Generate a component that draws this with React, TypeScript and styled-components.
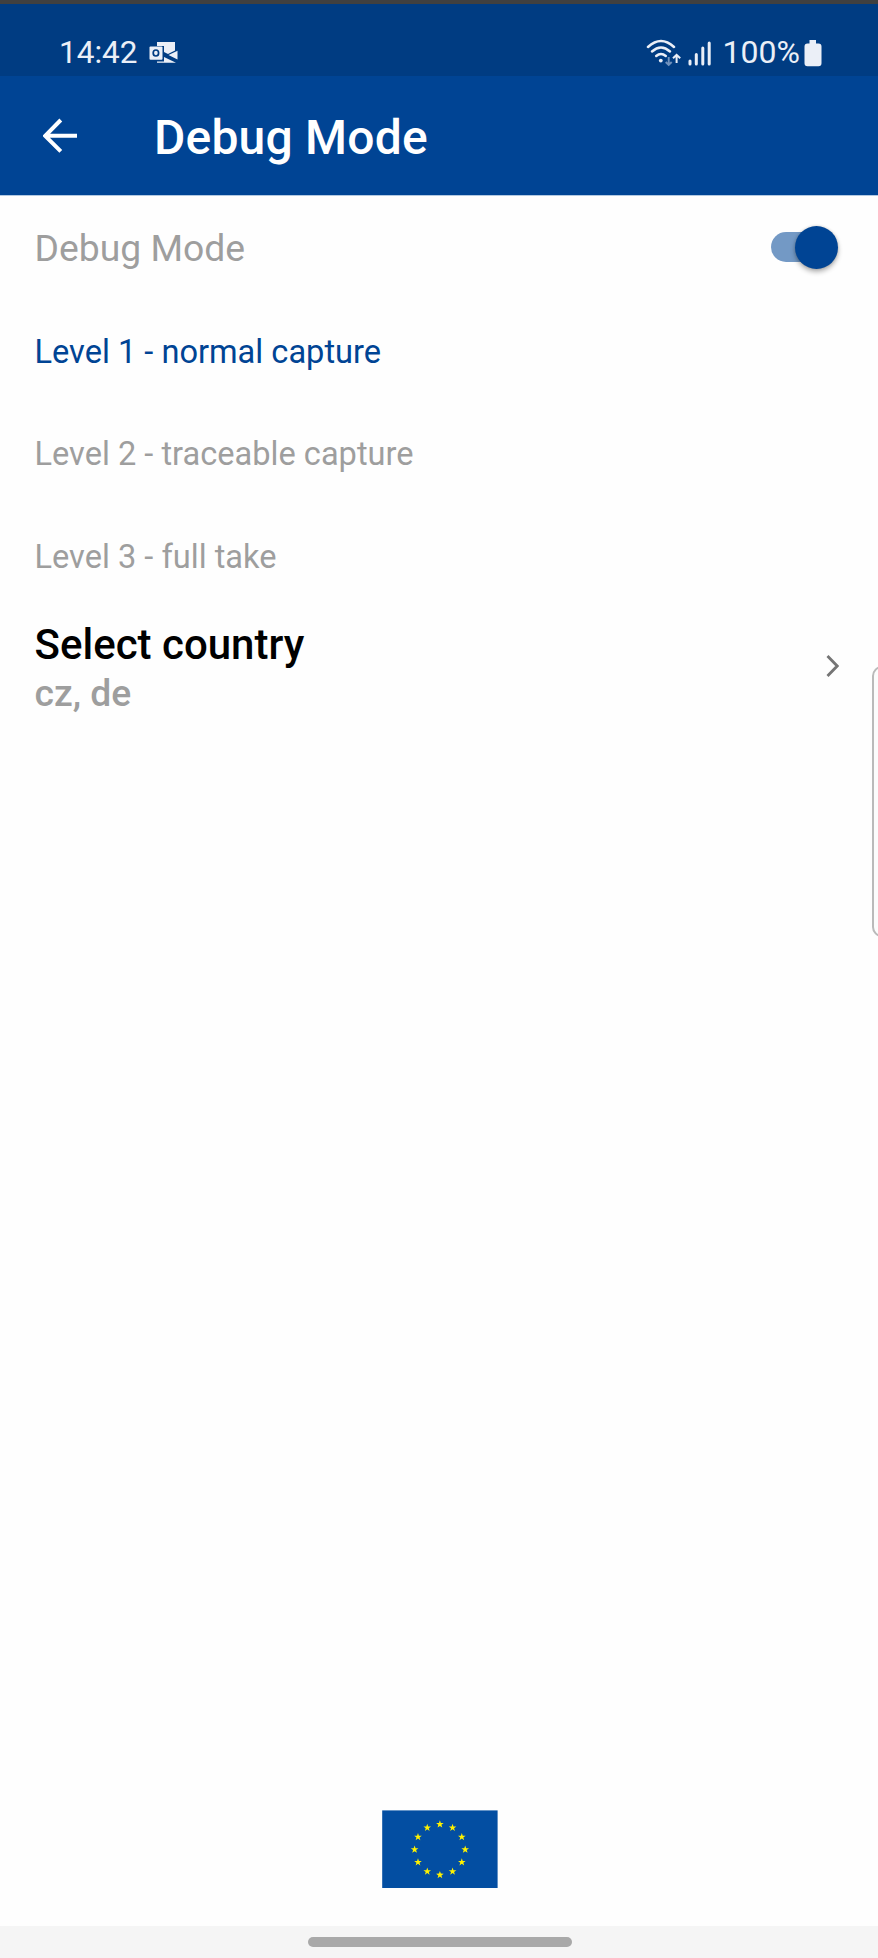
import React from 'react';
import styled, { createGlobalStyle } from 'styled-components';

const GlobalStyle = createGlobalStyle`
  * { box-sizing: border-box; }
  body {
    margin: 0;
    background: #fefefe;
    font-family: Roboto, "Liberation Sans", sans-serif;
  }
`;

const Screen = styled.div`
  position: relative;
  display: flex;
  flex-direction: column;
  width: 878px;
  height: 1958px;
  overflow: hidden;
  background: #fefefe;
`;

const StatusBar = styled.div`
  display: flex;
  justify-content: space-between;
  height: 76px;
  padding: 25px 56px 0 59px;
  border-top: 4px solid #404040;
  background: #003c82;
  color: #ebeff7;
`;

const StatusGroup = styled.div`
  display: flex;
  align-items: flex-start;
  height: 46px;
`;

const StatusText = styled.span<{ $size?: number; $line?: number }>`
  font-size: ${(p) => p.$size ?? 32}px;
  line-height: ${(p) => p.$line ?? 46}px;
  white-space: nowrap;
`;

const BatteryLevel = styled(StatusText)`
  margin-left: 11px;
`;

const Icon = styled.svg<{ $left?: number; $top?: number }>`
  display: block;
  flex: none;
  margin-left: ${(p) => p.$left ?? 0}px;
  margin-top: ${(p) => p.$top ?? 0}px;
`;

const AppBar = styled.header`
  display: flex;
  align-items: center;
  height: 120px;
  padding: 0 43px;
  border-bottom: 1px solid #b2c9e2;
  background: #004494;
  color: #fff;
`;

const Title = styled.h1`
  margin: 4px 0 0 75px;
  font-size: 48px;
  font-weight: 500;
  line-height: 56px;
  letter-spacing: 0.2px;
`;

const SettingRow = styled.div<{ $height: number }>`
  display: flex;
  align-items: center;
  justify-content: space-between;
  height: ${(p) => p.$height}px;
  padding: 0 39px 0 34.5px;
`;

const Label = styled.span<{ $size: number; $color: string; $weight?: number; $drop?: number }>`
  font-size: ${(p) => p.$size}px;
  font-weight: ${(p) => p.$weight ?? 400};
  line-height: 49px;
  padding-top: ${(p) => p.$drop ?? 0}px;
  color: ${(p) => p.$color};
  white-space: nowrap;
`;

const LabelStack = styled.div`
  display: flex;
  flex-direction: column;
  padding-top: 6.5px;
`;

const Track = styled.div`
  display: flex;
  align-items: center;
  justify-content: flex-end;
  width: 67px;
  height: 30px;
  margin: 0 1px 1px 0;
  border-radius: 15px;
  background: linear-gradient(to right, #7399c5 0 57px, transparent 57px);
`;

const Thumb = styled.div`
  flex: none;
  width: 43px;
  height: 43px;
  border-radius: 50%;
  background: #004494;
  box-shadow: 0 3px 5px rgba(0, 0, 0, 0.3), 0 0 3px rgba(0, 0, 0, 0.16);
`;

const FlagArea = styled.footer`
  display: flex;
  justify-content: center;
  margin-top: auto;
  padding: 0 0 38px 1px;
`;

const HomeBar = styled.div`
  display: flex;
  justify-content: center;
  height: 32px;
  padding-top: 11px;
  padding-left: 2px;
  background: #f5f5f5;
`;

const HomeHandle = styled.div`
  width: 264px;
  height: 10px;
  border-radius: 5px;
  background: #a9a9a9;
`;

const EdgePanelHandle = styled.div`
  position: absolute;
  top: 666px;
  right: -14px;
  width: 20px;
  height: 271px;
  border: 2px solid #bababa;
  border-radius: 10px;
  background: #fcfcfc;
`;

const BLUE = '#004494';
const GREY = '#9e9e9e';

function star(cx: number, cy: number, r: number) {
  return Array.from({ length: 10 }, (_, i) => {
    const a = (Math.PI / 5) * i - Math.PI / 2;
    const d = i % 2 ? r * 0.4 : r;
    return `${cx + d * Math.cos(a)},${cy + d * Math.sin(a)}`;
  }).join(' ');
}

function MailIcon() {
  return (
    <Icon width="30" height="24" viewBox="0 0 30 24" $left={12} $top={12}>
      <g fill="#ebeff7">
        <path d="M8 1h18v8.500L19 13l-4-2V5H8z" />
        <path d="M8 20.500h7V16l12 5.800H8z" />
        <path d="M19.500 14l9-4.300v8.800z" />
        <path d="M1.500 5.500h11q1 0 1 1v11.200q0 1-1 1h-11q-1 0-1-1V6.500q0-1 1-1z" />
      </g>
      <ellipse cx="6.900" cy="12" rx="2.700" ry="3" fill="none" stroke="#003c82" strokeWidth="1.700" />
    </Icon>
  );
}

function WifiIcon() {
  return (
    <Icon width="36" height="28" viewBox="0 0 36 28" $top={10}>
      <g fill="none" stroke="#ebeff7" strokeWidth="2.500" strokeLinecap="round">
        <path d="M2 8Q15 -4 28 8" />
        <path d="M6 12.500Q15 4.500 24 12.500" />
        <path d="M10.200 17Q15 13 19.800 17" />
      </g>
      <circle cx="14.800" cy="21.600" r="1.900" fill="#ebeff7" />
      <path d="M22.700 18v8M19.700 23l3 3 3-3" fill="none" stroke="#7192bd" strokeWidth="1.900" />
      <path d="M30.600 24v-8M27 19.300l3.600-3.500 3.600 3.500" fill="none" stroke="#ebeff7" strokeWidth="2" />
    </Icon>
  );
}

function SignalIcon() {
  return (
    <Icon width="24" height="26" viewBox="0 0 24 26" $left={5.5} $top={11}>
      <path
        d="M2 21v3M8.300 14.500V24M14.800 8v16M21.200 3v21"
        stroke="#ebeff7"
        strokeWidth="3"
        strokeLinecap="round"
      />
    </Icon>
  );
}

function BatteryIcon() {
  return (
    <Icon width="18" height="28" viewBox="0 0 18 28" $left={4} $top={11}>
      <path
        d="M5.500 0h6.500v3.500h2.500q3 0 3 3v16.700q0 3-3 3H3.500q-3 0-3-3V6.500q0-3 3-3h2z"
        fill="#ebeff7"
      />
    </Icon>
  );
}

function EuFlag() {
  return (
    <svg width="116" height="78" viewBox="0 0 116 78">
      <rect x="0.200" y="0.400" width="115.400" height="77.600" fill="#034ea2" />
      {Array.from({ length: 12 }, (_, i) => {
        const a = (Math.PI / 6) * i;
        return (
          <polygon
            key={i}
            points={star(57.9 + 25.3 * Math.sin(a), 39.6 - 25.3 * Math.cos(a), 4)}
            fill="#fff200"
          />
        );
      })}
    </svg>
  );
}

const levels = ['Level 1 - normal capture', 'Level 2 - traceable capture', 'Level 3 - full take'];

export default function App() {
  return (
    <>
      <GlobalStyle />
      <Screen>
        <StatusBar>
          <StatusGroup>
            <StatusText $size={31.5} $line={48}>14:42</StatusText>
            <MailIcon />
          </StatusGroup>
          <StatusGroup>
            <WifiIcon />
            <SignalIcon />
            <BatteryLevel>100%</BatteryLevel>
            <BatteryIcon />
          </StatusGroup>
        </StatusBar>
        <AppBar>
          <Icon width="36" height="36" viewBox="0 0 36 36">
            <path
              d="M34 17.800H3M17.800 2L2.200 17.800l15.600 15.600"
              fill="none"
              stroke="#fff"
              strokeWidth="4"
            />
          </Icon>
          <Title>Debug Mode</Title>
        </AppBar>
        <main>
          <SettingRow $height={103.5}>
            <Label $size={37.3} $color={GREY} $drop={1}>Debug Mode</Label>
            <Track role="switch" aria-checked="true">
              <Thumb />
            </Track>
          </SettingRow>
          {levels.map((text, i) => (
            <SettingRow key={text} $height={102.5}>
              <Label $size={32.6} $color={i === 0 ? BLUE : GREY} $drop={2.5}>{text}</Label>
            </SettingRow>
          ))}
          <SettingRow $height={118}>
            <LabelStack>
              <Label $size={42} $weight={500} $color="#000">Select country</Label>
              <Label $size={37.3} $weight={500} $color={GREY}>cz, de</Label>
            </LabelStack>
            <Icon width="13" height="24" viewBox="0 0 13 24">
              <path d="M1.500 2L11.200 12 1.500 22" fill="none" stroke="#757575" strokeWidth="2.800" />
            </Icon>
          </SettingRow>
        </main>
        <FlagArea>
          <EuFlag />
        </FlagArea>
        <HomeBar>
          <HomeHandle />
        </HomeBar>
        <EdgePanelHandle />
      </Screen>
    </>
  );
}
